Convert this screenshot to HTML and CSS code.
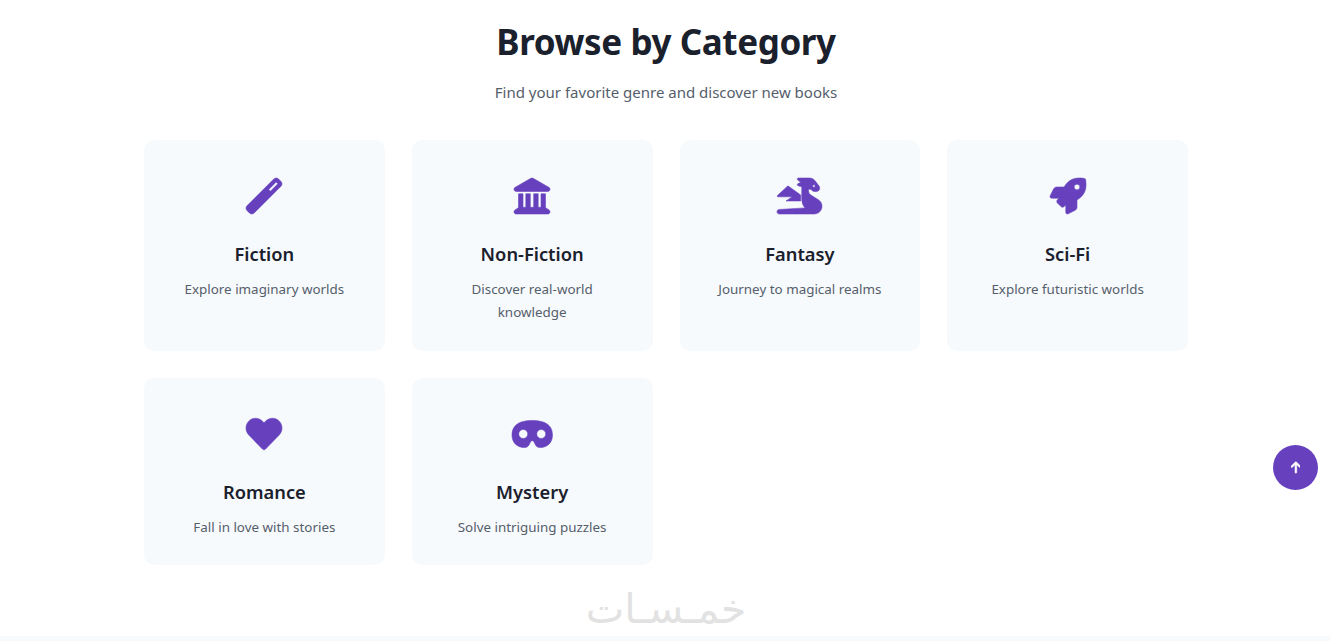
FILE: index.html
```html
<!DOCTYPE html>
<html lang="en">
<head>
  <meta charset="UTF-8">
  <title>Browse by Category</title>
  <link rel="stylesheet" href="styles.css">
</head>
<body>

  <section class="categories">
    <h1>Browse by Category</h1>
    <p class="subtitle">Find your favorite genre and discover new books</p>

    <div class="category-grid">
      <div class="category-card">
        <svg class="icon" viewBox="0 0 512 512"><path d="M14.1 463.3c-18.7-18.7-18.7-49.1 0-67.9L395.4 14.1c18.7-18.7 49.1-18.7 67.9 0l34.6 34.6c18.7 18.7 18.7 49.1 0 67.9L116.5 497.9c-18.7 18.7-49.1 18.7-67.9 0L14.1 463.3zM347.6 187.6l105.4-105.4L429.4 58.6 324 164l23.6 23.6z"/></svg>
        <h3>Fiction</h3>
        <p>Explore imaginary worlds</p>
      </div>
      <div class="category-card">
        <svg class="icon" viewBox="0 0 512 512"><path d="M240.1 4.2c9.8-5.6 21.9-5.6 31.8 0l171.8 98.1L448 104l0 .9 47.9 27.4c12.6 7.2 18.8 22 15.1 36s-16.4 23.8-30.9 23.8H32c-14.5 0-27.2-9.8-30.9-23.8s2.5-28.8 15.1-36L64 104.9V104l4.4-1.6L240.1 4.2zM64 224h64V416h40V224h64V416h48V224h64V416h40V224h64V420.3c.6 .3 1.2 .7 1.8 1.1l48 32c11.7 7.8 17 22.4 12.9 35.9S494.1 512 480 512H32c-14.1 0-26.5-9.2-30.6-22.7s1.1-28.1 12.9-35.9l48-32c.6-.4 1.2-.8 1.8-1.1V224z"/></svg>
        <h3>Non-Fiction</h3>
        <p>Discover real-world knowledge</p>
      </div>
      <div class="category-card">
        <svg class="icon" viewBox="0 0 640 512"><path fill-rule="evenodd" d="M352 124.5l-51.9-13c-6.5-1.6-11.3-7.1-12-13.8s2.8-13.1 8.7-16.1l40.8-20.4L294.4 28.8c-5.5-4.1-7.8-11.3-5.6-17.9S297.1 0 304 0H464c30.2 0 58.7 14.2 76.8 38.4l57.6 76.8c6.2 8.3 9.6 18.4 9.6 28.8c0 26.5-21.5 48-48 48H538.5c-17 0-33.3-6.7-45.3-18.7L480 160H448v21.5c0 24.8 12.8 47.9 33.8 61.1l106.6 66.6c32.1 20.1 51.6 55.2 51.6 93.1c0 60.6-49.1 109.7-109.8 109.7H32.3C14.5 512 0 497.5 0 479.7c0-17 13.3-31 30.3-32.2L400 425C370 400 352 350 352 291.5V124.5zM543 115a18 18 0 1 0 -36 0 18 18 0 1 0 36 0zM148 118c5-4 12-4 17 0L337 241v86H128l78-52c4-3 2-7-3-7H14c-10 0-16-11-8-18L148 118z"/></svg>
        <h3>Fantasy</h3>
        <p>Journey to magical realms</p>
      </div>
      <div class="category-card">
        <svg class="icon" viewBox="0 0 512 512"><path d="M505.12019,19.09375c-1.18945-5.53125-6.65819-11-12.207-12.1875C460.716,0,435.507,0,410.40747,0,307.17523,0,245.26909,55.20312,199.05238,128H94.83772c-16.34763.01562-35.55658,11.875-42.88664,26.48438L2.51562,253.29688A28.4,28.4,0,0,0,0,264a24.00867,24.00867,0,0,0,24.00582,24H127.81618l-22.47457,22.46875c-11.36521,11.36133-12.99607,32.25781,0,45.25L156.24582,406.625c11.15623,11.1875,32.15619,13.15625,45.27726,0l22.47457-22.46875V488a24.00867,24.00867,0,0,0,24.00581,24,28.55934,28.55934,0,0,0,10.707-2.51562l98.72834-49.39063c14.62888-7.29687,26.50776-26.5,26.50776-42.85937V312.79688c72.59753-46.3125,128.03493-108.40626,128.03493-211.09376C512.07526,76.5,512.07526,51.29688,505.12019,19.09375ZM384.04033,168A40,40,0,1,1,424.05,128,40.02322,40.02322,0,0,1,384.04033,168Z"/></svg>
        <h3>Sci-Fi</h3>
        <p>Explore futuristic worlds</p>
      </div>
      <div class="category-card">
        <svg class="icon" viewBox="0 0 512 512"><path d="M462.3 62.6C407.5 15.9 326 24.3 275.7 76.2L256 96.5l-19.7-20.3C186.1 24.3 104.5 15.9 49.7 62.6c-62.8 53.6-66.1 149.8-9.9 207.9l193.5 199.8c12.5 12.9 32.8 12.9 45.3 0l193.5-199.8c56.3-58.1 53-154.3-9.8-207.9z"/></svg>
        <h3>Romance</h3>
        <p>Fall in love with stories</p>
      </div>
      <div class="category-card">
        <svg class="icon" viewBox="0 0 576 512"><path d="M288 64C64 64 0 160 0 272S80 448 176 448h8.4c24.2 0 46.4-13.7 57.2-35.4l23.2-46.3c4.4-8.8 13.3-14.3 23.2-14.3s18.8 5.5 23.2 14.3l23.2 46.3c10.8 21.7 33 35.4 57.2 35.4H400c96 0 176-64 176-176s-64-208-288-208zM96 256a64 64 0 1 1 128 0A64 64 0 1 1 96 256zm320-64a64 64 0 1 1 0 128 64 64 0 1 1 0-128z"/></svg>
        <h3>Mystery</h3>
        <p>Solve intriguing puzzles</p>
      </div>
    </div>

    <div class="watermark" lang="ar" dir="rtl">خمـسـات</div>
  </section>

  <div class="next-section"></div>

  <button class="back-to-top" aria-label="Back to top">
    <svg viewBox="0 0 384 512"><path d="M214.6 41.4c-12.5-12.5-32.8-12.5-45.3 0l-160 160c-12.5 12.5-12.5 32.8 0 45.3s32.8 12.5 45.3 0L160 141.2V448c0 17.7 14.3 32 32 32s32-14.3 32-32V141.2L329.4 246.6c12.5 12.5 32.8 12.5 45.3 0s12.5-32.8 0-45.3l-160-160z"/></svg>
  </button>

</body>
</html>
```

FILE: styles.css
```css
html, body {
  height: 641px;
  overflow: hidden;
}
body {
  margin: 0;
  background: #fff;
  font-family: "Noto Sans", "Open Sans", Arial, sans-serif;
  color: #555e6b;
}
.categories {
  height: 636px;
  box-sizing: border-box;
  padding: 19px 0 0 2px;
  text-align: center;
}
h1 {
  margin: 0;
  font-size: 35px;
  line-height: 46px;
  font-weight: 700;
  letter-spacing: -0.4px;
  color: #1a202c;
}
.subtitle {
  margin: 15px 0 36px;
  font-size: 15px;
  line-height: 24px;
}
.category-grid {
  display: grid;
  grid-template-columns: repeat(4, 1fr);
  gap: 27px;
  width: 1044px;
  margin: 0 auto;
}
.category-card {
  padding: 38px 32px 26.5px;
  background: #f7fafd;
  border-radius: 10px;
}
.icon {
  display: block;
  height: 36px;
  margin: 0 auto 26px;
  overflow: visible;
  fill: #6741bd;
  stroke: #6741bd;
  stroke-width: 8;
}
h3 {
  margin: 0 0 11px;
  font-size: 18.3px;
  line-height: 27px;
  font-weight: 600;
  color: #1a202c;
}
.category-card p {
  margin: 0;
  font-size: 13.4px;
  line-height: 23px;
}
.watermark {
  margin-top: 19px;
  font-family: "DejaVu Sans", sans-serif;
  font-size: 41px;
  line-height: 50px;
  color: #e2e2e2;
}
.next-section {
  height: 5px;
  background: #f7fafd;
}
.back-to-top {
  position: fixed;
  right: 12px;
  bottom: 151px;
  display: flex;
  align-items: center;
  justify-content: center;
  width: 45px;
  height: 45px;
  padding: 0;
  background: #6741bd;
  border: none;
  border-radius: 50%;
  cursor: pointer;
}
.back-to-top svg {
  height: 13px;
  fill: #fff;
  stroke: #fff;
  stroke-width: 24;
}
```
